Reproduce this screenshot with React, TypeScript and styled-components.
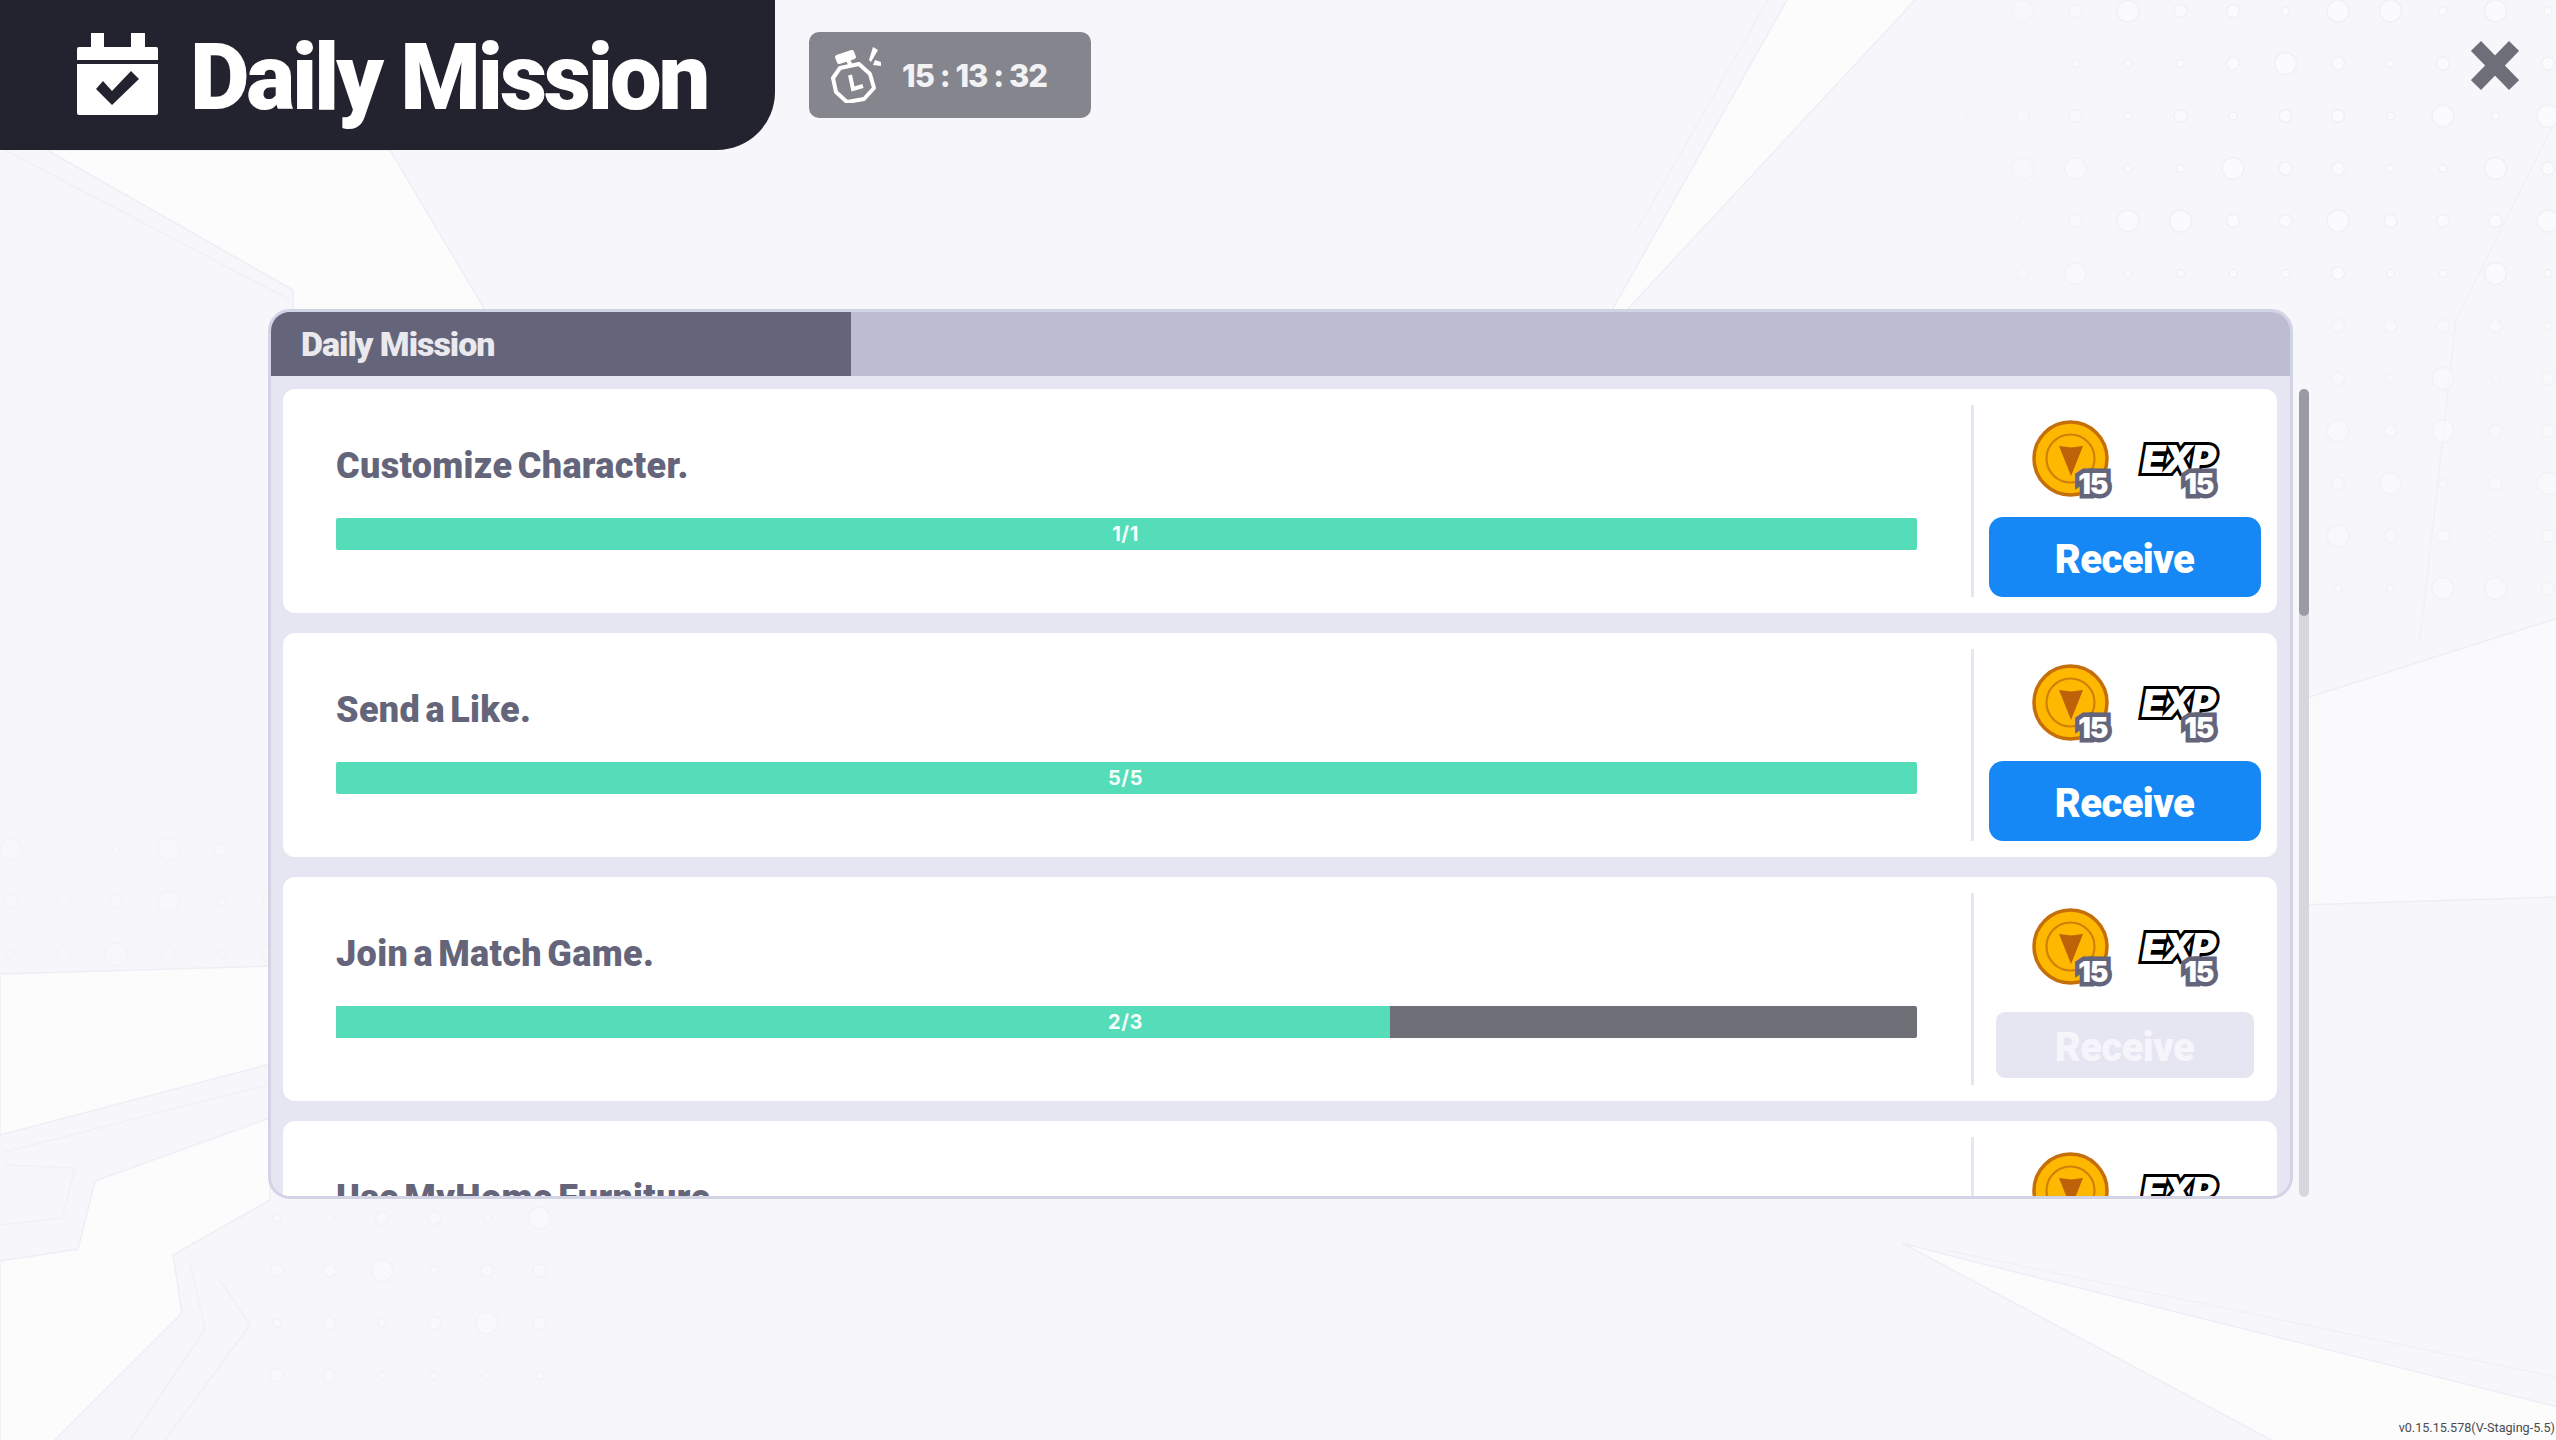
import React from "react";
import styled, { createGlobalStyle } from "styled-components";

const Global = createGlobalStyle`
  html, body { margin: 0; padding: 0; background: #f6f6fb; }
  * { box-sizing: border-box; }
`;

const Page = styled.div`
  position: relative;
  width: 2556px;
  height: 1440px;
  overflow: hidden;
  background: #f6f6fb;
  font-family: Roboto, "Liberation Sans", sans-serif;
`;
const Backdrop = styled.svg`
  position: absolute;
  inset: 0;
  width: 2556px;
  height: 1440px;
`;
const Content = styled.div`
  position: relative;
  display: flex;
  flex-direction: column;
  height: 100%;
`;
const TopBar = styled.header`
  display: flex;
  align-items: flex-start;
  height: 150px;
`;
const TitleBlock = styled.div`
  display: flex;
  align-items: center;
  gap: 32px;
  width: 775px;
  height: 150px;
  padding: 0 0 2px 77px;
  background: #22232f;
  border-bottom-right-radius: 58px;
`;
const PageTitle = styled.h1`
  margin: 0;
  padding-top: 8px;
  color: #fff;
  font-size: 92px;
  line-height: 1;
  font-weight: 900;
  letter-spacing: -3.2px;
  white-space: nowrap;
`;
const Timer = styled.div`
  display: flex;
  align-items: center;
  gap: 20px;
  width: 282px;
  height: 86px;
  margin: 32px 0 0 34px;
  padding-left: 22px;
  background: #85858d;
  border-radius: 10px;
  color: #f2f2f5;
  font-family: Inter, sans-serif;
  font-size: 31px;
  font-weight: 800;
  letter-spacing: -1px;
  white-space: pre;
`;
const CloseButton = styled.button`
  display: block;
  width: 48px;
  height: 49px;
  margin: 41px 37px 0 auto;
  padding: 0;
  border: 0;
  background: none;
`;
const PanelRow = styled.main`
  display: flex;
  gap: 6px;
  margin: 159px 0 0 268px;
`;
const Panel = styled.section`
  display: flex;
  flex-direction: column;
  width: 2025px;
  height: 890px;
  border: 3px solid #d2d3e5;
  border-radius: 22px;
  overflow: hidden;
  background: #e6e6f2;
`;
const TabBar = styled.div`
  flex: none;
  display: flex;
  height: 64px;
  background: #bcbdd2;
`;
const Tab = styled.div`
  width: 580px;
  padding-left: 30px;
  background: #64657a;
  color: #e9e9ee;
  font-size: 34px;
  line-height: 64px;
  font-weight: 900;
  letter-spacing: -1px;
`;
const List = styled.div`
  flex: 1;
  min-height: 0;
  overflow: hidden;
  display: flex;
  flex-direction: column;
  gap: 20px;
  padding: 13px 13px 0 12px;
`;
const Card = styled.article`
  flex: none;
  display: flex;
  height: 224px;
  background: #fff;
  border-radius: 12px;
  padding: 16px 0;
`;
const Info = styled.div`
  flex: 1;
  padding: 0 54px 0 53px;
`;
const MissionName = styled.h2`
  height: 113px;
  margin: 0;
  padding-top: 40px;
  color: #64657a;
  font-size: 36px;
  line-height: 42px;
  font-weight: 900;
  letter-spacing: 0.35px;
  word-spacing: -4px;
  white-space: nowrap;
`;
const Bar = styled.div`
  position: relative;
  height: 32px;
  background: #6f6f78;
  border-radius: 2px;
  overflow: hidden;
`;
const BarFill = styled.div`
  height: 100%;
  background: #55dcb8;
`;
const BarLabel = styled.span`
  position: absolute;
  inset: 0;
  display: flex;
  align-items: center;
  justify-content: center;
  padding-right: 2px;
  color: #f6fffc;
  font-family: Inter, sans-serif;
  font-size: 20px;
  font-weight: 700;
  letter-spacing: 0.5px;
`;
const Side = styled.div`
  flex: none;
  width: 306px;
  padding-right: 2px;
  border-left: 3px solid #e6e6f2;
  display: flex;
  flex-direction: column;
  align-items: center;
`;
const Rewards = styled.div`
  display: flex;
  gap: 28px;
  height: 78px;
  margin: 15px 0 19px;
`;
const Reward = styled.div`
  position: relative;
  width: 79px;
  height: 78px;
`;
const Badge = styled.span`
  position: absolute;
  right: 4px;
  bottom: 0;
  color: #fff;
  font-family: Inter, sans-serif;
  font-size: 28px;
  line-height: 28px;
  font-weight: 900;
  letter-spacing: -1px;
  -webkit-text-stroke: 9px #64657a;
  paint-order: stroke fill;
`;
const CoinBadge = styled(Badge)`
  right: 3px;
`;
const ExpMark = styled.span`
  position: absolute;
  left: 3px;
  top: 18px;
  color: #fff;
  font-family: Inter, sans-serif;
  font-size: 39px;
  line-height: 42px;
  font-style: italic;
  font-weight: 900;
  letter-spacing: -3px;
  -webkit-text-stroke: 6px #000;
  paint-order: stroke fill;
`;
const ButtonSlot = styled.div`
  display: flex;
  align-items: center;
  justify-content: center;
  height: 80px;
`;
const ReceiveButton = styled.button<{ $off?: boolean }>`
  width: ${(p) => (p.$off ? 258 : 272)}px;
  height: ${(p) => (p.$off ? 66 : 80)}px;
  margin: 0;
  padding: 4px 0 0;
  border: 0;
  border-radius: ${(p) => (p.$off ? 9 : 14)}px;
  background: ${(p) => (p.$off ? "#e6e6f2" : "#1588f5")};
  color: ${(p) => (p.$off ? "#f5f5fb" : "#fff")};
  font-family: Roboto, sans-serif;
  font-size: 40px;
  font-weight: 900;
  letter-spacing: -0.6px;
`;
const ScrollTrack = styled.div`
  width: 10px;
  height: 808px;
  margin-top: 80px;
  border-radius: 5px;
  background: #d6d6dc;
`;
const ScrollThumb = styled.div`
  height: 227px;
  border-radius: 5px;
  background: #9a9aa4;
`;
const Version = styled.div`
  position: absolute;
  right: 1px;
  bottom: 5px;
  color: #4a4a4f;
  font-size: 12.6px;
  line-height: 14px;
  white-space: nowrap;
`;

const rnd = (a: number, b: number) => {
  const v = Math.sin(a * 12.9898 + b * 78.233) * 43758.5453;
  return v - Math.floor(v);
};
type Field = { x0: number; y0: number; nx: number; ny: number; fade?: number; alpha: number };
const fields: Field[] = [
  { x0: 1970.5, y0: 11, nx: 12, ny: 6, fade: 5, alpha: 1 },
  { x0: 2338, y0: 326, nx: 5, ny: 6, alpha: 0.6 },
  { x0: 11, y0: 849, nx: 6, ny: 3, alpha: 0.4 },
  { x0: 277, y0: 1218, nx: 6, ny: 4, alpha: 0.6 },
];

function Background() {
  return (
    <Backdrop viewBox="0 0 2556 1440">
      <g fill="#fcfcfd" stroke="#eeeef4" strokeWidth="1.5">
        <polygon points="47,150 293,290 293,330 497,330 390,150" />
        <polygon points="1788,-2 1917,-2 1625,312 1611,312" />
        <polygon points="0,974 270,966 270,1064 0,1135" />
        <polygon points="0,1261 78,1249 95,1181 270,1118 270,1200 173,1255 182,1313 163,1332 120,1375 53,1442 0,1442" />
        <polygon points="1902,1243 1967,1260 2558,1407 2558,1442 2275,1442" />
        <polygon points="2300,700 2558,618 2558,897 2300,905" fill="#fafafc" />
      </g>
      <g fill="none" stroke="#f0f0f5" strokeWidth="1.5">
        <polyline points="5,150 290,300" />
        <polyline points="1768,0 1635,233" />
        <polyline points="2554,123 2456,320 2420,640" />
        <polyline points="1945,1250 2556,1377" />
        <polyline points="5,1152 267,1085" />
        <polyline points="5,1165 75,1168 62,1218 0,1225" />
        <polyline points="190,1262 205,1330 130,1440" />
        <polyline points="220,1280 250,1325 165,1440" />
      </g>
      {fields.map((f, i) =>
        Array.from({ length: f.ny }).flatMap((_, r) =>
          Array.from({ length: f.nx }).map((_, c) => {
            const n = rnd(c + i * 31 + 1, r + 7);
            const rad = n < 0.35 ? 4 : n < 0.75 ? 6.5 : 11;
            return (
              <circle
                key={`${i}-${r}-${c}`}
                cx={f.x0 + c * 52.5}
                cy={f.y0 + r * 52.5}
                r={rad}
                fill="#fbfbfd"
                stroke="#f0f0f5"
                strokeWidth="1.5"
                opacity={f.fade ? Math.min(1, (c + 1) / f.fade) : f.alpha}
              />
            );
          })
        )
      )}
    </Backdrop>
  );
}

const CalendarIcon = () => (
  <svg width="81" height="82" viewBox="0 0 81 82" style={{ flex: "none" }}>
    <path fill="#fff" d="M14 0h13v14H14zM54 0h14v14H54zM2 14h77a2 2 0 0 1 2 2v11H0V16a2 2 0 0 1 2-2zM0 31h81v49a2 2 0 0 1-2 2H2a2 2 0 0 1-2-2z" />
    <polygon fill="#22232f" points="19,56 26,48 35,58 54,38 62,46 35,72" />
  </svg>
);

const StopwatchIcon = () => (
  <svg width="51" height="56" viewBox="0 0 51 56" style={{ flex: "none" }}>
    <g fill="none" stroke="#fff" strokeWidth="4" strokeLinejoin="round">
      <polygon points="9,21 28,17 39,27 43,41 33,52 16,55 5,45 2,31" />
      <path d="M17 13l3 6" />
      <path d="M6 10l15-5 2 5-15 5z" fill="#fff" />
      <path d="M19 28l3 14 10-3" strokeLinejoin="miter" />
    </g>
    <polygon fill="#fff" points="42,0 47,3 40,15 38,13" />
    <polygon fill="#fff" points="44,13 50,15 50,19 42,18" />
  </svg>
);

const CloseIcon = () => (
  <svg width="48" height="49" viewBox="0 0 48 49" style={{ display: "block" }}>
    <g stroke="#6e6e78" strokeWidth="14">
      <line x1="5" y1="5" x2="43" y2="44" />
      <line x1="43" y1="5" x2="5" y2="44" />
    </g>
  </svg>
);

const CoinIcon = () => (
  <svg width="78" height="78" viewBox="0 0 78 78">
    <circle cx="38.5" cy="38.5" r="36.5" fill="#ffb800" stroke="#c56f0a" strokeWidth="3.5" />
    <circle cx="38.5" cy="38.5" r="24" fill="none" stroke="#cf8108" strokeWidth="2.2" />
    <polygon fill="#bd6208" points="27,26 39,27.5 51,26 39,56" />
  </svg>
);

type Mission = { name: string; done: number; total: number };
const missions: Mission[] = [
  { name: "Customize Character.", done: 1, total: 1 },
  { name: "Send a Like.", done: 5, total: 5 },
  { name: "Join a Match Game.", done: 2, total: 3 },
  { name: "Use MyHome Furniture.", done: 0, total: 1 },
];

export default function App() {
  return (
    <Page>
      <Global />
      <Background />
      <Content>
        <TopBar>
          <TitleBlock>
            <CalendarIcon />
            <PageTitle>Daily Mission</PageTitle>
          </TitleBlock>
          <Timer>
            <StopwatchIcon />
            <span>15 : 13 : 32</span>
          </Timer>
          <CloseButton aria-label="Close">
            <CloseIcon />
          </CloseButton>
        </TopBar>
        <PanelRow>
          <Panel>
            <TabBar>
              <Tab>Daily Mission</Tab>
            </TabBar>
            <List>
              {missions.map((m) => (
                <Card key={m.name}>
                  <Info>
                    <MissionName>{m.name}</MissionName>
                    <Bar>
                      <BarFill style={{ width: `${(m.done / m.total) * 100}%` }} />
                      <BarLabel>
                        {m.done}/{m.total}
                      </BarLabel>
                    </Bar>
                  </Info>
                  <Side>
                    <Rewards>
                      <Reward>
                        <CoinIcon />
                        <CoinBadge>15</CoinBadge>
                      </Reward>
                      <Reward>
                        <ExpMark>EXP</ExpMark>
                        <Badge>15</Badge>
                      </Reward>
                    </Rewards>
                    <ButtonSlot>
                      <ReceiveButton $off={m.done < m.total}>Receive</ReceiveButton>
                    </ButtonSlot>
                  </Side>
                </Card>
              ))}
            </List>
          </Panel>
          <ScrollTrack>
            <ScrollThumb />
          </ScrollTrack>
        </PanelRow>
      </Content>
      <Version>v0.15.15.578(V-Staging-5.5)</Version>
    </Page>
  );
}
